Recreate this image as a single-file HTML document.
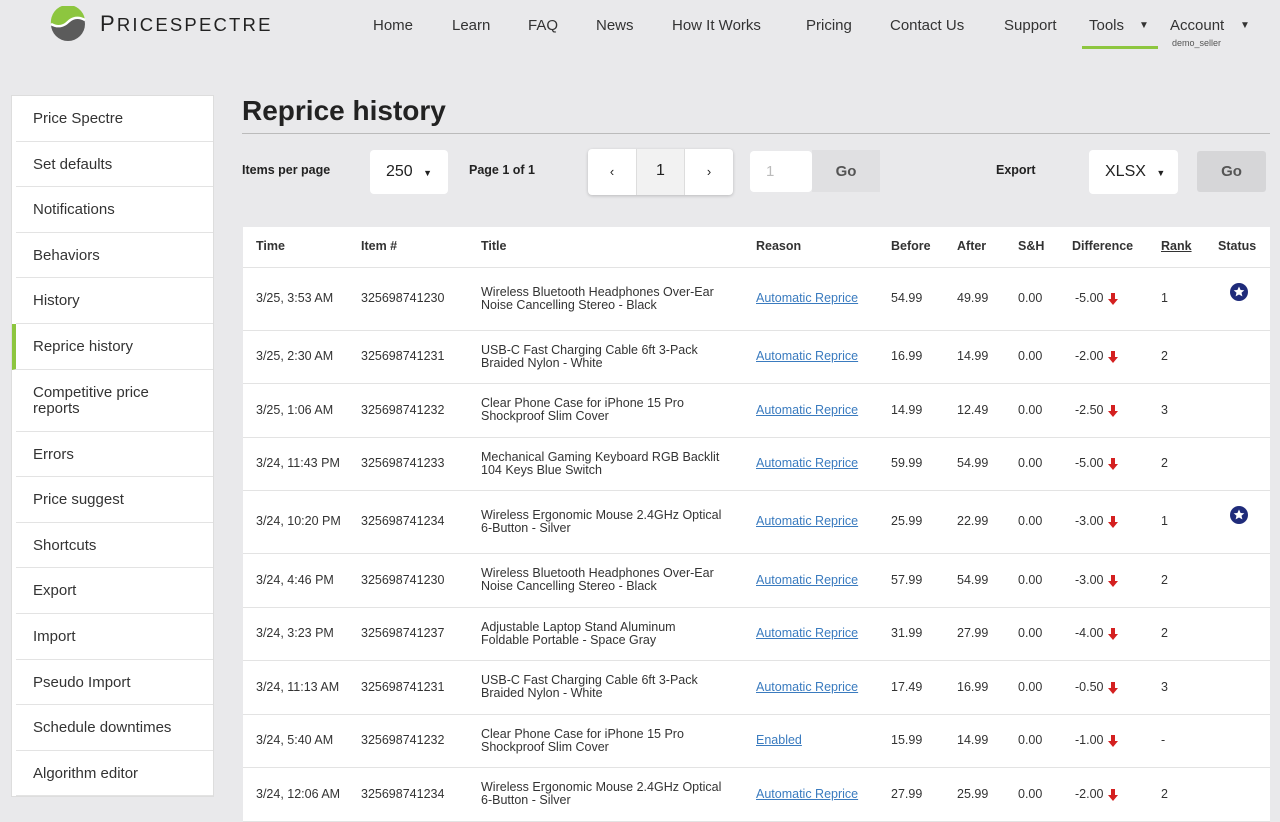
<!DOCTYPE html>
<html><head><meta charset="utf-8"><style>
*{box-sizing:border-box;margin:0;padding:0}
body{width:1280px;height:800px;overflow:hidden;background:#e9e9eb;font-family:"Liberation Sans",sans-serif;color:#222;position:relative}
.a{position:absolute}
.nav span{position:absolute;top:17px;font-size:15px;color:#333}
.side{left:11px;top:95px;width:203px;background:#fff;border:1px solid #ddd}
.side div{height:45.6px;border-bottom:1px solid #e3e3e3;padding:14px 20px 0 17px;font-size:15px;color:#333;margin-left:4px}
.side div.act{border-left:4px solid #8dc63f;margin-left:0;padding-left:17px}
.side div.two{height:62px;padding-top:15px;line-height:16px}
table{position:absolute;left:243px;top:227px;width:1027px;border-collapse:collapse;background:#fff;font-size:12.5px;color:#333;table-layout:fixed}
td,th{text-align:left;padding:0 0 0 13px;border-bottom:1px solid #e3e3e3;vertical-align:middle;line-height:13px}
th{height:40px;font-weight:bold;font-size:12.5px}
a{color:#3a7bbf;text-decoration:underline}
.dn{display:inline-block;width:10px;height:12px;vertical-align:-3px;margin-left:4px}
.box{background:#fff;border-radius:4px;position:absolute}
.t{padding-right:14px}
.st{vertical-align:top;padding-top:14px;padding-left:24px}
</style></head><body>
<svg class="a" style="left:50px;top:6px" width="36" height="36" viewBox="0 0 36 36"><circle cx="18" cy="18" r="17" fill="#5b5b5b"/><path d="M1 18A17 17 0 0 1 35 14C30 10 24 10 20 15S10 22 1 18Z" fill="#8dc63f"/><path d="M1 18C8 22 14 20 18 16S28 10 35 14" stroke="#fff" stroke-width="2.5" fill="none"/></svg>
<div class="a" style="left:100px;top:11px;font-size:22px;letter-spacing:2.2px;color:#222">P<span style="font-size:18.5px">RICESPECTRE</span></div>
<div class="nav"><span style="left:373px">Home</span><span style="left:452px">Learn</span><span style="left:528px">FAQ</span><span style="left:596px">News</span><span style="left:672px">How It Works</span><span style="left:806px">Pricing</span><span style="left:890px">Contact Us</span><span style="left:1004px">Support</span><span style="left:1089px">Tools</span><span style="left:1139px;font-size:10px;top:20px">▼</span><span style="left:1170px">Account</span><span style="left:1240px;font-size:10px;top:20px">▼</span></div>
<div class="a" style="left:1082px;top:46px;width:76px;height:3px;background:#8dc63f"></div>
<div class="a" style="left:1172px;top:38px;font-size:9px;color:#555">demo_seller</div>
<div class="a side">
<div>Price Spectre</div><div>Set defaults</div><div>Notifications</div><div>Behaviors</div><div>History</div><div class="act">Reprice history</div><div class="two">Competitive price reports</div><div>Errors</div><div>Price suggest</div><div>Shortcuts</div><div>Export</div><div>Import</div><div>Pseudo Import</div><div>Schedule downtimes</div><div>Algorithm editor</div></div>
<div class="a" style="left:242px;top:95px;font-size:28px;font-weight:bold;color:#222">Reprice history</div>
<div class="a" style="left:242px;top:133px;width:1028px;height:1px;background:#bbb"></div>
<div class="a" style="left:242px;top:163px;font-size:12.5px;font-weight:bold">Items per page</div>
<div class="box" style="left:370px;top:150px;width:78px;height:44px;padding:13px 0 0 16px;font-size:16px">250 <span style="font-size:9px;margin-left:6px">▼</span></div>
<div class="a" style="left:469px;top:163px;font-size:12.5px;font-weight:bold">Page 1 of 1</div>
<div class="box" style="left:588px;top:149px;width:145px;height:46px;box-shadow:0 1px 3px rgba(0,0,0,.2);display:flex">
<div style="width:48px;text-align:center;padding-top:15px;font-size:13px">‹</div><div style="width:49px;background:#f2f2f2;text-align:center;padding-top:13px;font-size:16px;border-left:1px solid #ddd;border-right:1px solid #ddd">1</div><div style="width:48px;text-align:center;padding-top:15px;font-size:13px">›</div></div>
<div class="box" style="left:750px;top:151px;width:62px;height:41px;padding:12px 0 0 16px;color:#bbb;font-size:15px">1</div>
<div class="a" style="left:812px;top:150px;width:68px;height:42px;background:#e0e0e2;text-align:center;padding-top:13px;font-size:15px;font-weight:bold;color:#555">Go</div>
<div class="a" style="left:996px;top:163px;font-size:12.5px;font-weight:bold">Export</div>
<div class="box" style="left:1089px;top:150px;width:89px;height:44px;padding:13px 0 0 16px;font-size:16px">XLSX <span style="font-size:9px;margin-left:6px">▼</span></div>
<div class="a" style="left:1197px;top:151px;width:69px;height:41px;background:#d6d6d8;border-radius:3px;text-align:center;padding-top:12px;font-size:15px;font-weight:bold;color:#555">Go</div>
<svg width="0" height="0" style="position:absolute"><defs><symbol id="d" viewBox="0 0 10 12"><path d="M3 0h4v6h3L5 12 0 6h3z" fill="#d42020"/></symbol><symbol id="s" viewBox="0 0 20 20"><circle cx="10" cy="10" r="9" fill="#1f2b7a"/><path d="M10 4.5l1.6 3.5 3.7.3-2.8 2.4.9 3.7L10 12.5 6.6 14.4l.9-3.7-2.8-2.4 3.7-.3z" fill="#fff"/></symbol></defs></svg>
<table>
<colgroup><col style="width:105px"><col style="width:120px"><col style="width:275px"><col style="width:135px"><col style="width:66px"><col style="width:61px"><col style="width:54px"><col style="width:89px"><col style="width:57px"><col></colgroup>
<tr><th>Time</th><th>Item #</th><th>Title</th><th>Reason</th><th>Before</th><th>After</th><th>S&amp;H</th><th>Difference</th><th><u>Rank</u></th><th>Status</th></tr>
<tr style="height:63px"><td>3/25, 3:53 AM</td><td>325698741230</td><td class="t">Wireless Bluetooth Headphones Over-Ear Noise Cancelling Stereo - Black</td><td><a>Automatic Reprice</a></td><td>54.99</td><td>49.99</td><td>0.00</td><td style="padding-left:16px">-5.00<svg class="dn"><use href="#d"/></svg></td><td>1</td><td class="st"><svg width="20" height="20"><use href="#s"/></svg></td></tr>
<tr style="height:53px"><td>3/25, 2:30 AM</td><td>325698741231</td><td class="t">USB-C Fast Charging Cable 6ft 3-Pack Braided Nylon - White</td><td><a>Automatic Reprice</a></td><td>16.99</td><td>14.99</td><td>0.00</td><td style="padding-left:16px">-2.00<svg class="dn"><use href="#d"/></svg></td><td>2</td><td></td></tr>
<tr style="height:54px"><td>3/25, 1:06 AM</td><td>325698741232</td><td class="t">Clear Phone Case for iPhone 15 Pro Shockproof Slim Cover</td><td><a>Automatic Reprice</a></td><td>14.99</td><td>12.49</td><td>0.00</td><td style="padding-left:16px">-2.50<svg class="dn"><use href="#d"/></svg></td><td>3</td><td></td></tr>
<tr style="height:53px"><td>3/24, 11:43 PM</td><td>325698741233</td><td class="t">Mechanical Gaming Keyboard RGB Backlit 104 Keys Blue Switch</td><td><a>Automatic Reprice</a></td><td>59.99</td><td>54.99</td><td>0.00</td><td style="padding-left:16px">-5.00<svg class="dn"><use href="#d"/></svg></td><td>2</td><td></td></tr>
<tr style="height:63px"><td>3/24, 10:20 PM</td><td>325698741234</td><td class="t">Wireless Ergonomic Mouse 2.4GHz Optical<br>6&#8209;Button - Silver</td><td><a>Automatic Reprice</a></td><td>25.99</td><td>22.99</td><td>0.00</td><td style="padding-left:16px">-3.00<svg class="dn"><use href="#d"/></svg></td><td>1</td><td class="st"><svg width="20" height="20"><use href="#s"/></svg></td></tr>
<tr style="height:54px"><td>3/24, 4:46 PM</td><td>325698741230</td><td class="t">Wireless Bluetooth Headphones Over-Ear Noise Cancelling Stereo - Black</td><td><a>Automatic Reprice</a></td><td>57.99</td><td>54.99</td><td>0.00</td><td style="padding-left:16px">-3.00<svg class="dn"><use href="#d"/></svg></td><td>2</td><td></td></tr>
<tr style="height:53px"><td>3/24, 3:23 PM</td><td>325698741237</td><td class="t">Adjustable Laptop Stand Aluminum<br>Foldable Portable - Space Gray</td><td><a>Automatic Reprice</a></td><td>31.99</td><td>27.99</td><td>0.00</td><td style="padding-left:16px">-4.00<svg class="dn"><use href="#d"/></svg></td><td>2</td><td></td></tr>
<tr style="height:54px"><td>3/24, 11:13 AM</td><td>325698741231</td><td class="t">USB-C Fast Charging Cable 6ft 3-Pack Braided Nylon - White</td><td><a>Automatic Reprice</a></td><td>17.49</td><td>16.99</td><td>0.00</td><td style="padding-left:16px">-0.50<svg class="dn"><use href="#d"/></svg></td><td>3</td><td></td></tr>
<tr style="height:53px"><td>3/24, 5:40 AM</td><td>325698741232</td><td class="t">Clear Phone Case for iPhone 15 Pro Shockproof Slim Cover</td><td><a>Enabled</a></td><td>15.99</td><td>14.99</td><td>0.00</td><td style="padding-left:16px">-1.00<svg class="dn"><use href="#d"/></svg></td><td>-</td><td></td></tr>
<tr style="height:54px"><td>3/24, 12:06 AM</td><td>325698741234</td><td class="t">Wireless Ergonomic Mouse 2.4GHz Optical<br>6&#8209;Button - Silver</td><td><a>Automatic Reprice</a></td><td>27.99</td><td>25.99</td><td>0.00</td><td style="padding-left:16px">-2.00<svg class="dn"><use href="#d"/></svg></td><td>2</td><td></td></tr>
</table>
</body></html>
